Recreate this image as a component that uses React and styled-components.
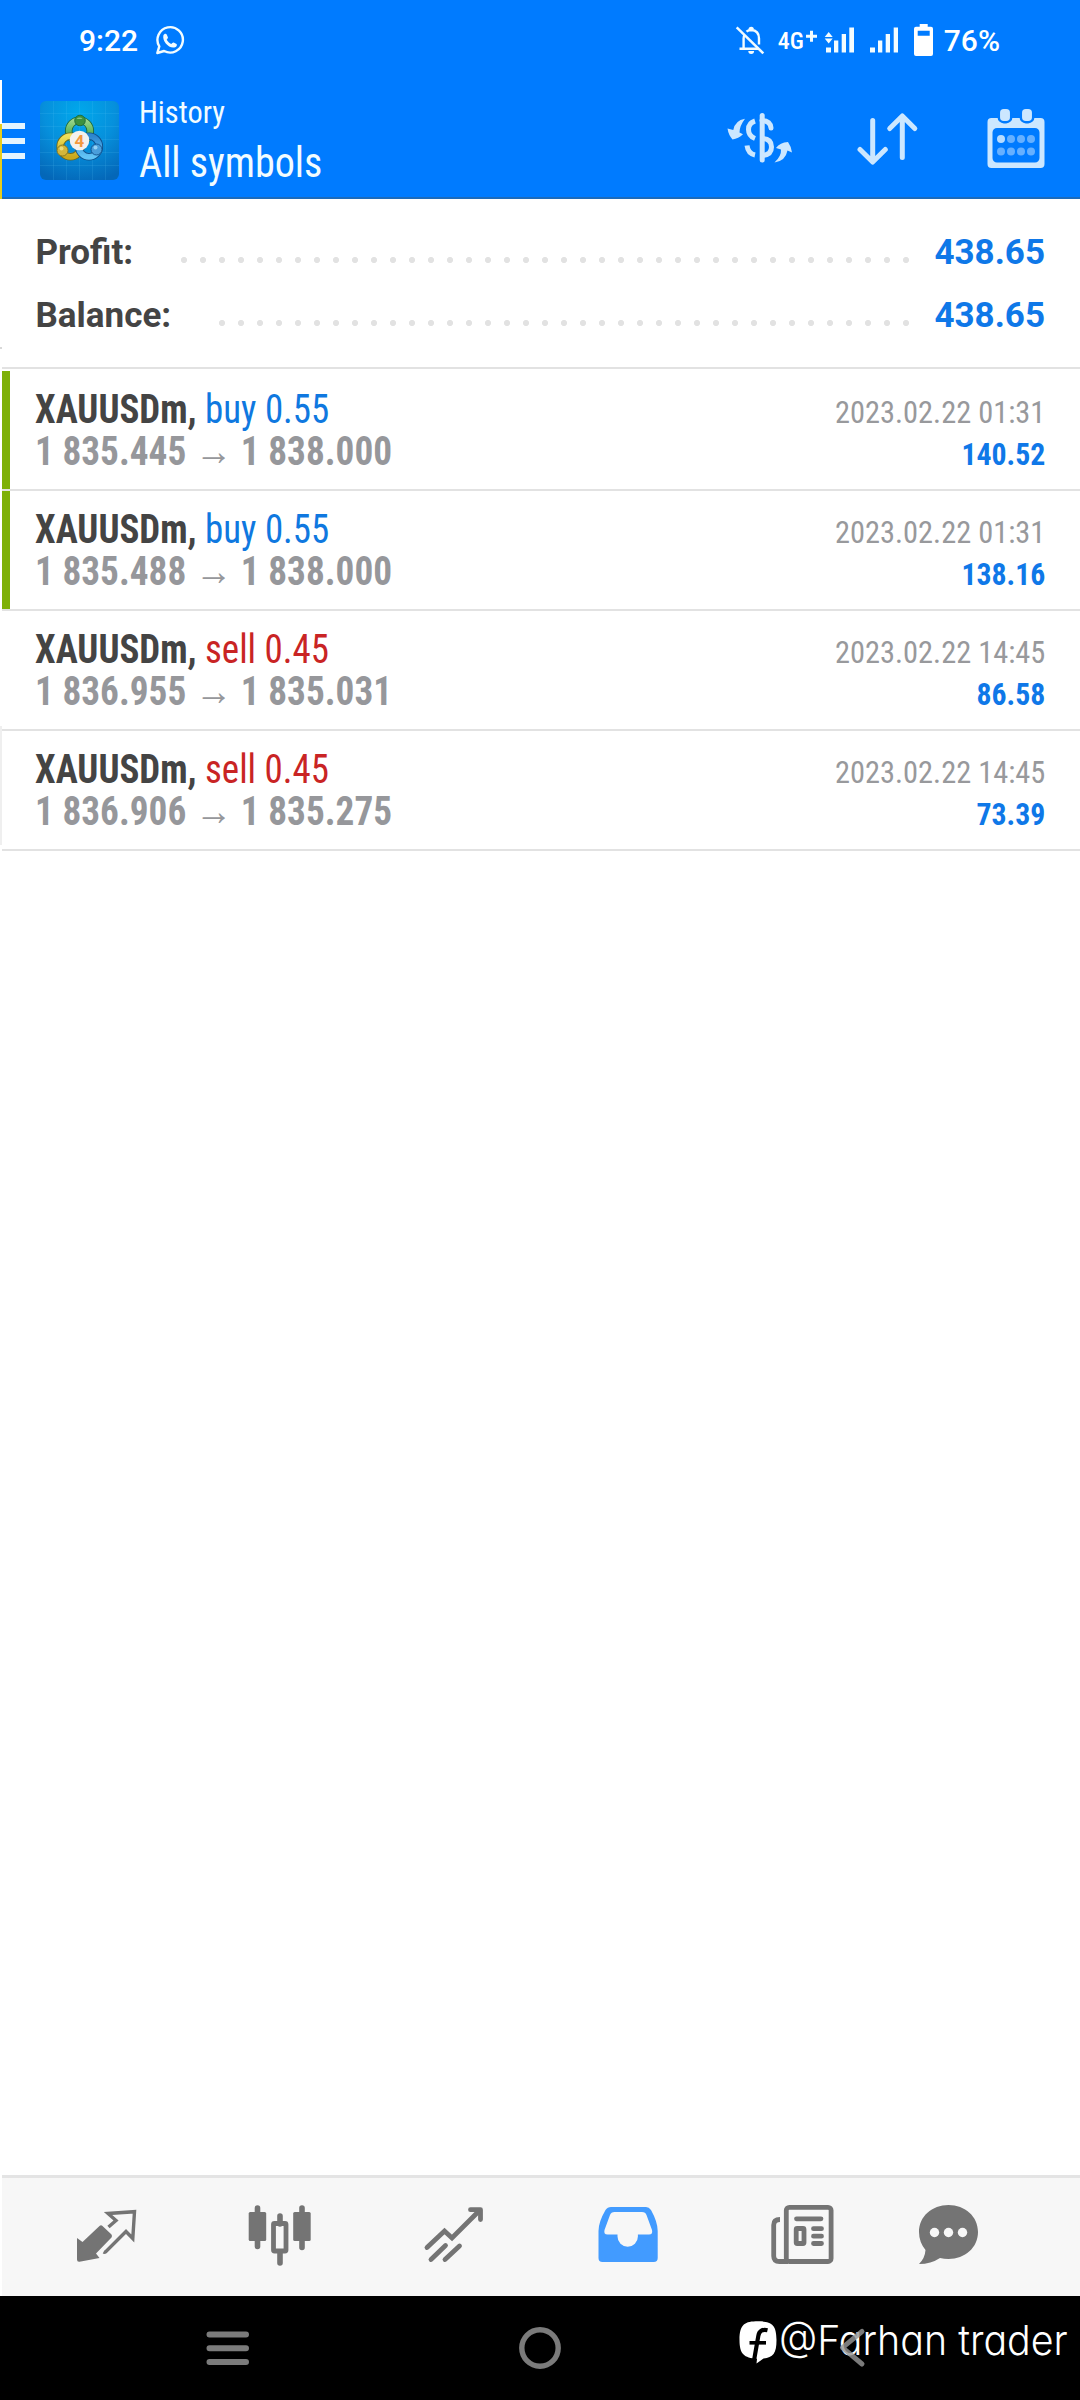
import React from 'react';
import styled, { createGlobalStyle } from 'styled-components';

//-----*-----*-----*-----*-----//

const GlobalStyle = createGlobalStyle`
  * { box-sizing: border-box; }
  body {
    margin: 0;
    background: #fff;
    font-family: Roboto, sans-serif;
  }
  svg { display: block; flex-shrink: 0; }
`

const trades = [
  { side: 'buy', volume: '0.55', open: '1 835.445', close: '1 838.000', time: '2023.02.22 01:31', profit: '140.52', marked: true },
  { side: 'buy', volume: '0.55', open: '1 835.488', close: '1 838.000', time: '2023.02.22 01:31', profit: '138.16', marked: true },
  { side: 'sell', volume: '0.45', open: '1 836.955', close: '1 835.031', time: '2023.02.22 14:45', profit: '86.58' },
  { side: 'sell', volume: '0.45', open: '1 836.906', close: '1 835.275', time: '2023.02.22 14:45', profit: '73.39' },
]

const App = () => (
  <Phone>
    <GlobalStyle />
    <StatusBar>
      <Clock>9:22</Clock>
      <WhatsApp />
      <StatusRight>
        <BellOff />
        <Network>4G</Network>
        <Signals />
        <Clock>76%</Clock>
      </StatusRight>
    </StatusBar>
    <Body>
      <Edge>
        <EdgePart $h={44} />
        <EdgePart $h={75} $color="#e6cd1e" />
        <EdgePart $h={148} />
        <EdgePart $h={2} $color="#d8d8d8" />
        <EdgePart $h={377} />
        <EdgePart $h={119} $color="#efefef" />
      </Edge>
      <Screen>
        <AppBar>
          <Burger><i /><i /><i /></Burger>
          <Logo />
          <Titles>
            <Caption>History</Caption>
            <Title>All symbols</Title>
          </Titles>
          <Actions>
            <DollarIcon />
            <SortIcon />
            <CalendarIcon />
          </Actions>
        </AppBar>
        <Summary>
          <SummaryRow>
            <Label>Profit:</Label>
            <Dots />
            <Amount>438.65</Amount>
          </SummaryRow>
          <SummaryRow>
            <Label>Balance:</Label>
            <Dots />
            <Amount>438.65</Amount>
          </SummaryRow>
        </Summary>
        <List>
          {trades.map(t => (
            <Trade key={t.open}>
              <Marker $on={t.marked} />
              <Deal>
                <Line><b>XAUUSDm,</b> <Side $side={t.side}>{t.side} {t.volume}</Side></Line>
                <Prices>{t.open} <Arrow>→</Arrow> {t.close}</Prices>
              </Deal>
              <Result>
                <Time>{t.time}</Time>
                <Profit>{t.profit}</Profit>
              </Result>
            </Trade>
          ))}
        </List>
        <TabBar>
          <Tab><QuotesIcon /></Tab>
          <Tab><ChartsIcon /></Tab>
          <Tab><TradeIcon /></Tab>
          <Tab $active><HistoryIcon /></Tab>
          <Tab><NewsIcon /></Tab>
          <Tab><ChatIcon /></Tab>
        </TabBar>
      </Screen>
    </Body>
    <NavBar>
      <Watermark>
        <BadgeIcon />
        <Handle>@Farhan trader</Handle>
      </Watermark>
      <NavSlot><RecentsIcon /></NavSlot>
      <NavSlot><HomeIcon /></NavSlot>
      <NavSlot><BackIcon /></NavSlot>
    </NavBar>
  </Phone>
)

//-----*-----*-----*-----*-----//
// Layout

const Phone = styled.div`
  display: flex;
  flex-direction: column;
  width: 1080px;
  height: 2400px;
  overflow: hidden;
  background: #fff;
`

const Body = styled.div`
  display: flex;
  height: 2216px;
`

const Edge = styled.div`
  display: flex;
  flex-direction: column;
  width: 2px;
`

const EdgePart = styled.div`
  height: ${p => p.$h}px;
  background: ${p => p.$color || '#fff'};
`

const Screen = styled.div`
  display: flex;
  flex-direction: column;
  flex: 1;
  min-width: 0;
`

//-----*-----*-----*-----*-----//
// Status bar

const StatusBar = styled.div`
  display: flex;
  align-items: center;
  height: 80px;
  padding: 0 80px 0 79px;
  background: #007bff;
  color: #fff;
`

const Clock = styled.span`
  font-size: 30px;
  font-weight: 500;
  line-height: 80px;
  padding-top: 1px;
`

const StatusRight = styled.div`
  display: flex;
  align-items: center;
  margin-left: auto;
`

const Network = styled.span`
  margin: 1px 1px 0 13px;
  font-size: 24px;
  font-weight: 500;
  font-stretch: 75%;
`

//-----*-----*-----*-----*-----//
// App bar

const AppBar = styled.div`
  display: flex;
  height: 119px;
  padding-right: 34px;
  background: #007bff;
  border-bottom: 2px solid #1c6bbb;
`

const Burger = styled.div`
  display: flex;
  flex-direction: column;
  gap: 9px;
  width: 23px;
  margin: 43px 15px 0 0;
  & i {
    height: 6px;
    background: #e4f4ff;
  }
`

const Titles = styled.div`
  padding: 12px 0 0 20px;
  color: #f2fcff;
  font-stretch: 75%;
  white-space: nowrap;
`

const Caption = styled.div`
  font-size: 32px;
  line-height: 40px;
  transform: scaleX(0.95);
  transform-origin: left;
`

const Title = styled.div`
  font-size: 42px;
  line-height: 61px;
  transform: scaleX(0.955);
  transform-origin: left;
`

const Actions = styled.div`
  display: flex;
  align-items: flex-start;
  gap: 62px;
  margin-left: auto;
  padding-top: 25px;
  & svg:last-child {
    margin-left: 5px;
  }
`

//-----*-----*-----*-----*-----//
// Totals

const Summary = styled.div`
  padding: 22px 35px 20px 33.5px;
  border-bottom: 2px solid #e2e2e2;
`

const SummaryRow = styled.div`
  display: flex;
  align-items: center;
  height: 63px;
  font-size: 35px;
  font-weight: 700;
  line-height: 63px;
`

const Label = styled.span`
  color: #444;
`

const Amount = styled.span`
  color: #0f78e8;
`

const Dots = styled.div`
  flex: 1;
  height: 6px;
  margin: 14px 22px 0 48px;
  background: radial-gradient(circle at 3px 3px, #e2e2e2 2.7px, transparent 3.4px) 0 0 / 19px 6px repeat-x;
`

//-----*-----*-----*-----*-----//
// Trades

const List = styled.div`
  flex: 1;
  padding-top: 2px;
`

const Trade = styled.div`
  display: flex;
  height: 120px;
  padding-right: 35px;
  border-bottom: 2px solid #e2e2e2;
  font-stretch: 75%;
  white-space: nowrap;
`

const Marker = styled.div`
  width: 8px;
  margin-right: 25px;
  background: ${p => (p.$on ? '#7eb008' : 'transparent')};
`

const Deal = styled.div`
  padding-top: 18px;
  font-size: 40px;
  line-height: 42px;
  color: #444;
`

const Line = styled.div`
  height: 42px;
  transform: scaleX(0.922);
  transform-origin: left;
`

const Side = styled.span`
  color: ${p => (p.$side === 'buy' ? '#0f78e0' : '#c92424')};
`

const Prices = styled.div`
  height: 42px;
  font-weight: 700;
  color: #96979b;
  transform: scaleX(0.932);
  transform-origin: left;
`

const Arrow = styled.span`
  font-weight: 400;
  line-height: 1;
`

const Result = styled.div`
  margin-left: auto;
  padding-top: 20px;
  font-size: 32px;
  line-height: 42px;
  text-align: right;
`

const Time = styled.div`
  color: #98999c;
  transform: scaleX(0.95);
  transform-origin: right;
`

const Profit = styled.div`
  font-weight: 700;
  color: #0f78e8;
  transform: scaleX(0.93);
  transform-origin: right;
`

//-----*-----*-----*-----*-----//
// Bottom bars

const TabBar = styled.div`
  display: grid;
  grid-template-columns: repeat(5, 174px) 118px;
  height: 121px;
  padding-left: 17px;
  background: #f7f7f7;
  border-top: 3px solid #e4e4e4;
`

const Tab = styled.div`
  display: flex;
  align-items: center;
  justify-content: center;
  color: ${p => (p.$active ? '#429bff' : '#747474')};
`

const NavBar = styled.div`
  position: relative;
  display: grid;
  grid-template-columns: 312px 312px 312px;
  justify-content: center;
  height: 104px;
  background: #000;
  color: rgba(150, 150, 150, 0.82);
`

const NavSlot = styled.div`
  position: relative;
  display: flex;
  align-items: center;
  justify-content: center;
`

// Floats over the system navigation
const Watermark = styled.div`
  position: absolute;
  top: 24px;
  left: 739px;
  display: flex;
  width: 341px;
  color: #fff;
`

const Handle = styled.span`
  margin-left: 1px;
  font-family: Inter, sans-serif;
  font-size: 41px;
  font-weight: 350;
  font-feature-settings: 'cv11';
  line-height: 41px;
  white-space: nowrap;
  transform: scaleX(0.96);
  transform-origin: left;
`

//-----*-----*-----*-----*-----//
// Status icons

const WhatsAppSvg = styled.svg`
  margin-left: 17px;
`

const WhatsApp = () => (
  <WhatsAppSvg width="30" height="30" viewBox="155 25 30 30" fill="none" stroke="#f2fcff">
    <path d="M157.3 53l2-6.6a12.7 12.7 0 1 1 4.8 4.6z" strokeWidth="2.4" strokeLinejoin="round" />
    <path d="M163.4 35.3c.6-1.6 2.6-2.1 3.3-.8l1.2 2.7c.3.9-.8 1.9-1.2 2.6 1.1 2 2.6 3.3 4.6 4.2.7-.5 1.5-1.8 2.4-1.5l2.8 1.4c1 .7.1 2.8-1.3 3.3-5.6 2.2-13.3-5.6-11.8-11.9z" fill="#f2fcff" stroke="none" />
  </WhatsAppSvg>
)

const BellOff = () => (
  <svg width="30" height="30" viewBox="737 25 30 30" fill="none" stroke="#f2fcff" strokeWidth="2.4">
    <path d="M738.7 27.3L765.3 53.3" strokeWidth="2.5" />
    <path d="M741.5 48.8H760M745.6 48.5V38.5Q745.6 36.5 746.5 34.8M748.5 31.7Q750.5 30 753.2 30Q761 30.5 761 38.5V44.5" />
    <path d="M750.5 29.5a2.7 2.7 0 0 1 5.4 0zM750.3 51a2.9 2.9 0 0 0 5.8 0z" fill="#f2fcff" stroke="none" />
  </svg>
)

const SignalsSvg = styled.svg`
  margin-right: 9px;
`

const Signals = () => (
  <SignalsSvg width="130" height="34" viewBox="806 23 130 34" fill="#f2fcff">
    <path d="M807 34.7h4v-4h3v4h4v3h-4v4h-3v-4h-4z" />
    <path d="M829.7 32l4 5h-8zM825.7 38.5h8l-4 5z" />
    <path d="M827 47.5h5v5h-5zM835 40.5h4.3v12H835zM842.7 34h4.3v18.5h-4.3zM850.3 27.5h4.7v25h-4.7z" />
    <path d="M871 47.5h5v5h-5zM879 40.5h4.3v12H879zM886.7 34h4.3v18.5h-4.3zM894.7 27.5h4.3v25h-4.3z" />
    <path fill="#fff" fillRule="evenodd" d="M920.7 24h8v2.7h3.3a2 2 0 0 1 2 2V54a2 2 0 0 1-2 2h-15a2 2 0 0 1-2-2V28.7a2 2 0 0 1 2-2h3.7zM918.7 30.7v5h12v-5z" />
  </SignalsSvg>
)

//-----*-----*-----*-----*-----//
// App bar icons

const LogoSvg = styled.svg`
  margin-top: 21px;
`

const Logo = () => (
  <LogoSvg width="79" height="79" viewBox="0 0 79 79">
    <defs>
      <radialGradient id="sky" cx="0.5" cy="0.15" r="0.9">
        <stop offset="0" stopColor="#00a8ec" />
        <stop offset="0.5" stopColor="#0690dc" />
        <stop offset="1" stopColor="#0467b8" />
      </radialGradient>
      <linearGradient id="green" x2="0" y2="1">
        <stop offset="0" stopColor="#9ad68a" />
        <stop offset="1" stopColor="#2e9a3a" />
      </linearGradient>
      <linearGradient id="yellow" x2="0" y2="1">
        <stop offset="0" stopColor="#f0e05a" />
        <stop offset="1" stopColor="#c9a81c" />
      </linearGradient>
      <linearGradient id="blue" x2="0" y2="1">
        <stop offset="0" stopColor="#2d86cf" />
        <stop offset="1" stopColor="#62c4f6" />
      </linearGradient>
    </defs>
    <rect width="79" height="79" rx="6" fill="url(#sky)" />
    <path d="M13.5 0V79M26.500 0V79M39.500 0V79M52.500 0V79M65.500 0V79M0 12.500H79M0 25.500H79M0 38.500H79M0 51.500H79M0 64.500H79" stroke="#5cc8f5" strokeOpacity="0.15" />
    <g fill="none">
      <circle cx="39.500" cy="30" r="10.800" stroke="#1d6a3c" strokeWidth="7.600" />
      <circle cx="39.500" cy="30" r="10.800" stroke="url(#green)" strokeWidth="5.800" />
      <circle cx="30.500" cy="45.500" r="10.300" stroke="#6b6a20" strokeWidth="7.600" />
      <circle cx="30.500" cy="45.500" r="10.300" stroke="url(#yellow)" strokeWidth="5.800" />
      <circle cx="49" cy="45.500" r="10.300" stroke="#0f4f8c" strokeWidth="7.600" />
      <circle cx="49" cy="45.500" r="10.300" stroke="url(#blue)" strokeWidth="5.800" />
    </g>
    <g strokeWidth="0.9">
      <circle cx="40" cy="19.500" r="5.300" fill="#3c9140" stroke="#1d6a3c" />
      <circle cx="22.500" cy="49.500" r="5.500" fill="#d3b63a" stroke="#7d7220" />
      <circle cx="56.500" cy="48.500" r="5.500" fill="#4a9edb" stroke="#0f4f8c" />
    </g>
    <path d="M36.500 18a3.500 3 0 0 1 6 0z" fill="#a5dc9c" opacity="0.7" />
    <circle cx="21.500" cy="47.500" r="2" fill="#f2e58c" opacity="0.8" />
    <circle cx="55.500" cy="46.500" r="2" fill="#a8dcfa" opacity="0.8" />
    <circle cx="39.500" cy="39.500" r="9.800" fill="#f3f1ee" />
    <text x="39.500" y="45.500" textAnchor="middle" fontFamily="Roboto" fontWeight="700" fontSize="17" fill="#f2993f">4</text>
  </LogoSvg>
)

const DollarIcon = () => (
  <svg width="68" height="60" viewBox="6 5 68 60" fill="none" stroke="#cce7ff" strokeWidth="5">
    <path d="M42.2 15.5V60" strokeLinecap="round" />
    <path d="M42 20.5Q50.5 21 51 28" strokeLinecap="round" />
    <path d="M43 38.5Q51.5 39 51.5 47Q51.5 54.5 43 55.5" />
    <path d="M35 21Q28.5 23 28.5 29.5Q28.5 36 35 38.5M27 45.5Q28 53.5 35 55" />
    <path d="M25 18.8Q15 20.5 13.3 30L7.5 28.5Q8.5 35 12.5 39.5Q18.5 38.5 23 34.3L19.5 32.5Q19.5 26 25 18.8z" fill="#cce7ff" stroke="none" />
    <path d="M54.5 62.5Q61.5 56 61 49.5L56 48Q60 42.5 68 42Q71.5 47 72 52.5L67.5 50.5Q65.5 61 54.5 62.5z" fill="#cce7ff" stroke="none" />
  </svg>
)

const SortIcon = () => (
  <svg width="64" height="60" viewBox="856 105 64 60" fill="none" stroke="#cce7ff" strokeWidth="5" strokeLinecap="round" strokeLinejoin="round">
    <path d="M872.7 120.5V161.5M860 149.5L872.7 162L885.3 149.5" />
    <path d="M902.3 157.5V117M889.7 128.5L902.3 116L914.8 128.5" />
  </svg>
)

const CalendarIcon = () => (
  <svg width="59" height="64" viewBox="987 105 59 64">
    <path fill="#cce7ff" fillRule="evenodd" d="M992 118H1040.5a4 4 0 0 1 4 4V164a4 4 0 0 1-4 4H991.5a4 4 0 0 1-4-4V122a4 4 0 0 1 4-4zM997 128a4.5 4.5 0 0 0-4.5 4.5V158a4.5 4.5 0 0 0 4.5 4.5H1035a4.5 4.5 0 0 0 4.5-4.5V132.5a4.5 4.5 0 0 0-4.5-4.5z" />
    <g fill="#cce7ff" stroke="#007bff" strokeWidth="2.5">
      <rect x="998.8" y="107.8" width="12.4" height="14.4" rx="5" />
      <rect x="1020.8" y="107.8" width="12.4" height="14.4" rx="5" />
    </g>
    {[1001, 1011, 1021, 1031].map(x => (
      <g key={x} fill="#66b0ff">
        <circle cx={x} cy="139" r="4" fill={x === 1001 ? '#b8dcff' : '#66b0ff'} />
        <circle cx={x} cy="151.5" r="4" />
      </g>
    ))}
  </svg>
)

//-----*-----*-----*-----*-----//
// Tab icons

const TabIcon = ({ x, children }) => (
  <svg width="70" height="70" viewBox={`${x} 42 70 70`} fill="none" stroke="currentColor">
    {children}
  </svg>
)

const QuotesIcon = () => (
  <TabIcon x={71}>
    <path d="M77 78L82.5 82L99.5 66Q101 64.5 102.5 66L111.5 74.5Q112.5 76 111.5 77.5L96 93.5L99.5 98L79.5 101.7Q77 102 77 99.5z" fill="currentColor" stroke="none" />
    <path d="M108.5 67L116 60.5L108 53.5L134.5 51.7L132.8 78.5L126 71.5L106 91.5Q104.5 92.5 103.5 92" strokeWidth="3.4" />
  </TabIcon>
)

const ChartsIcon = () => (
  <TabIcon x={245}>
    <path d="M257.5 48V86.5M302 48V87.5M280 56V64M280 92V103" strokeWidth="5.6" strokeLinecap="round" />
    <rect x="248.7" y="52" width="17.5" height="29" rx="1.5" fill="currentColor" stroke="none" />
    <rect x="293.2" y="52" width="17.5" height="29" rx="1.5" fill="currentColor" stroke="none" />
    <rect x="273.5" y="63.5" width="12.5" height="27.5" rx="1" strokeWidth="4.8" />
  </TabIcon>
)

const TradeIcon = () => (
  <TabIcon x={419}>
    <path d="M427 87.5L444.5 71L452 78L479 51M431 99.5L445.5 85.5M445 99.5L459.5 86" strokeWidth="4.8" strokeLinecap="round" />
    <path d="M470.5 49.7H480.5V59.5" strokeWidth="4.8" strokeLinecap="round" strokeLinejoin="round" />
  </TabIcon>
)

const HistoryIcon = () => (
  <TabIcon x={593}>
    <path
      fill="currentColor"
      stroke="none"
      fillRule="evenodd"
      d="M611 47H646Q649 47 651 50Q657.7 62 657.7 71V98Q657.7 102 653.7 102H602.5Q598.5 102 598.5 98V71Q598.5 62 605.5 50Q607.5 47 611 47zM614.5 52Q611 52 610 55L604.5 70Q603.5 74.5 607.5 74.5H617.5V76.5a10.2 10.2 0 0 0 20.4 0V74.5H649Q653 74.5 652 70L646.5 55Q645.5 52 642 52z"
    />
  </TabIcon>
)

const NewsIcon = () => (
  <TabIcon x={767}>
    <rect x="786.3" y="47.3" width="44.8" height="54.2" rx="3" strokeWidth="4.8" />
    <path d="M780 59.5Q773.7 59.5 773.7 65V96Q773.7 101.5 779.5 101.5H788" strokeWidth="4.8" />
    <path d="M796.5 58.8H821M813.5 68.7H821.5M813.5 76.2H821.5M813.5 83.5H821.5" strokeWidth="4.8" strokeLinecap="round" />
    <rect x="796.2" y="68.5" width="7.8" height="15" rx="1" strokeWidth="4.8" />
  </TabIcon>
)

const ChatIcon = () => (
  <TabIcon x={913}>
    <path
      fill="currentColor"
      stroke="none"
      d="M948.5 45C965 45 978 56.5 978 72S965 99 948.5 99Q944 99 940 98Q931 104 919 104Q925 98 925.5 90Q919 82 919 72C919 56.5 932 45 948.5 45z"
    />
    <g fill="#f7f7f7" stroke="none">
      <circle cx="934.5" cy="72.5" r="4.7" />
      <circle cx="948.5" cy="72.5" r="4.7" />
      <circle cx="962.5" cy="72.5" r="4.7" />
    </g>
  </TabIcon>
)

//-----*-----*-----*-----*-----//
// System navigation

const RecentsIcon = () => (
  <svg width="44" height="36" viewBox="0 0 44 36" stroke="currentColor" strokeWidth="6" strokeLinecap="round">
    <path d="M3.5 4.5H40M3.5 18.2H40M3.5 32H40" />
  </svg>
)

const HomeIcon = () => (
  <svg width="42" height="42" viewBox="0 0 42 42" fill="none" stroke="currentColor" strokeWidth="5.4">
    <circle cx="21" cy="21" r="18.2" />
  </svg>
)

const BackIcon = () => (
  <svg width="28" height="42" viewBox="837 2327 28 42" fill="none" stroke="currentColor" strokeWidth="5" strokeLinecap="round" strokeLinejoin="round">
    <path d="M861 2331.5L841.5 2347.7L861 2364" />
  </svg>
)

const BadgeIcon = () => (
  <svg width="39" height="44" viewBox="739 2320 39 44">
    <path d="M758 2321.3C771 2321.3 776.5 2324 776.5 2340C776.5 2353.5 773 2357.5 763.5 2358.5L756.5 2363.5L757 2358.7C744 2358 739.5 2354 739.5 2340C739.5 2324 745 2321.3 758 2321.3z" fill="#fff" />
    <path d="M767.5 2330.3Q759.5 2328.5 758.3 2336L753.5 2363.5" fill="none" stroke="#000" strokeWidth="4.2" />
    <path d="M749.5 2342.8H766" stroke="#000" strokeWidth="3.6" />
  </svg>
)

export default App;
